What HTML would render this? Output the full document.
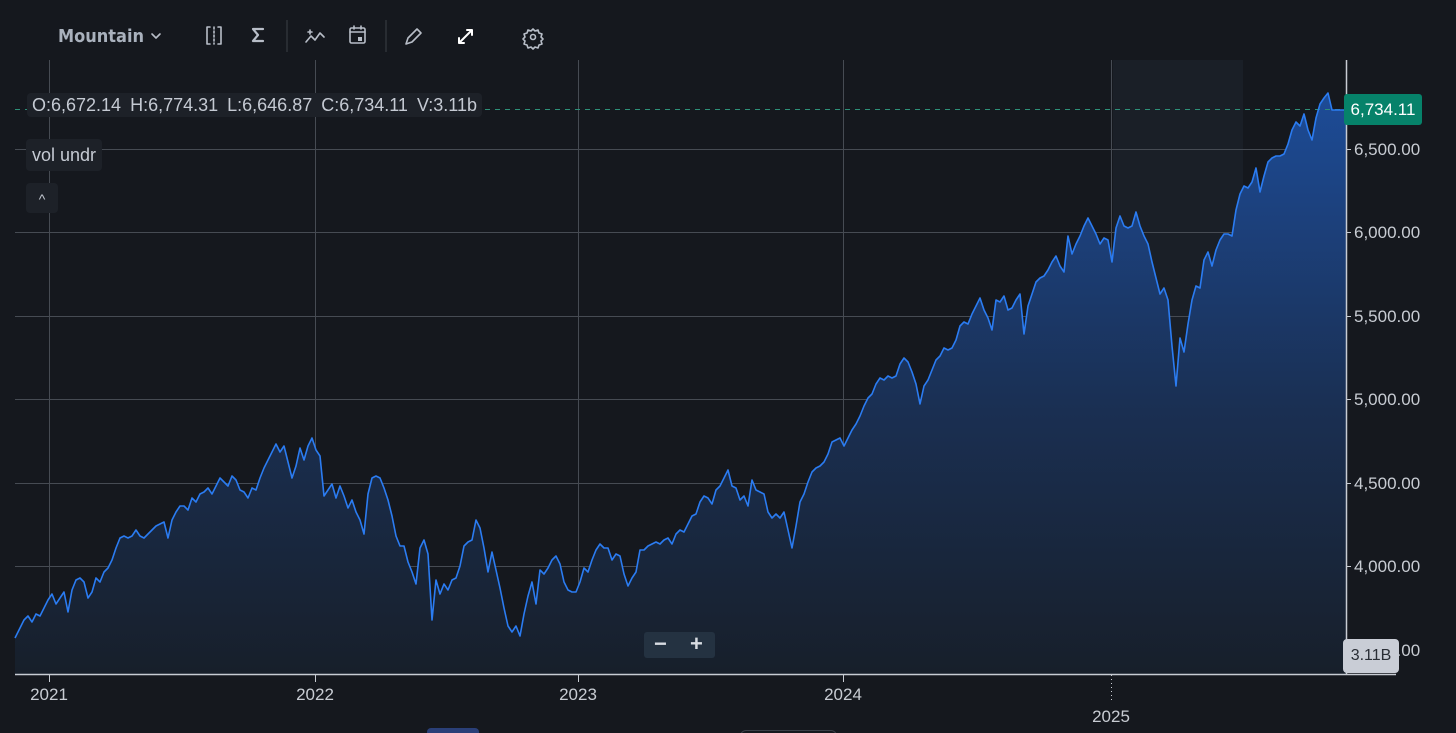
<!DOCTYPE html><html><head><style>
html,body{margin:0;width:1456px;height:733px;background:#15181e;overflow:hidden;font-family:"Liberation Sans",sans-serif;position:relative}
.t{position:absolute;color:#c5cad3}
.ax{position:absolute;left:1354px;font-size:17px;color:#c8ccd3}
.yr{position:absolute;font-size:17px;color:#c8ccd3;transform:translateX(-50%)}
</style></head><body>
<svg width="1456" height="733" style="position:absolute;left:0;top:0">
<defs><linearGradient id="g" gradientUnits="userSpaceOnUse" x1="0" y1="90" x2="0" y2="674"><stop offset="0" stop-color="#1d4c98"/><stop offset="0.55" stop-color="#1a2f52"/><stop offset="1" stop-color="#171f2a"/></linearGradient></defs>
<rect x="1113" y="60" width="130" height="614" fill="#1a1f27"/>
<g stroke="#464b53" stroke-width="1">
<line x1="15" y1="149.5" x2="1346" y2="149.5"/><line x1="15" y1="232.5" x2="1346" y2="232.5"/><line x1="15" y1="316.5" x2="1346" y2="316.5"/><line x1="15" y1="399.5" x2="1346" y2="399.5"/><line x1="15" y1="483.5" x2="1346" y2="483.5"/><line x1="15" y1="566.5" x2="1346" y2="566.5"/><line x1="15" y1="650.5" x2="1346" y2="650.5"/>
<line x1="49.5" y1="60" x2="49.5" y2="674"/><line x1="315.5" y1="60" x2="315.5" y2="674"/><line x1="578.5" y1="60" x2="578.5" y2="674"/><line x1="843.5" y1="60" x2="843.5" y2="674"/><line x1="1111.5" y1="60" x2="1111.5" y2="674"/>
</g>
<polygon id="p" fill="url(#g)" points="15,674 15,638 18,632 24,620 28,616 32,622 36,614 40,616 44,608 48,600 52,594 56,604 60,598 64,592 68,612 72,590 76,580 80,578 84,582 88,598 92,592 96,578 100,582 104,572 108,568 112,560 116,548 120,538 124,536 128,538 132,536 136,530 140,536 144,538 148,534 152,530 156,526 160,524 164,522 168,538 172,520 176,512 180,506 184,506 188,510 192,498 196,502 200,494 204,492 208,488 212,494 216,486 220,478 224,482 228,486 232,476 236,480 240,490 244,492 248,498 252,488 256,490 260,478 264,468 268,460 272,452 276,444 280,452 284,446 288,462 292,478 296,466 300,448 304,460 308,446 312,438 316,450 320,456 324,496 328,490 332,484 336,498 340,486 344,496 348,508 352,500 356,512 360,520 364,534 368,494 372,478 376,476 380,478 384,488 388,500 392,516 396,536 400,546 404,546 408,562 412,572 416,584 420,548 424,540 428,554 432,620 436,580 440,594 444,584 448,590 452,580 456,578 460,566 464,546 468,542 472,540 476,520 480,528 484,548 488,572 492,552 496,570 500,588 504,608 508,626 512,632 516,626 520,636 524,614 528,596 532,582 536,604 540,570 544,574 548,568 552,560 556,556 560,564 564,582 568,590 572,592 576,592 580,582 584,568 588,572 592,560 596,550 600,544 604,548 608,548 612,560 616,554 620,556 624,574 628,586 632,578 636,572 640,550 644,550 648,546 652,544 656,542 660,544 664,540 668,538 672,544 676,534 680,530 684,532 688,524 692,516 696,514 700,502 704,496 708,498 712,504 716,490 720,486 724,478 728,470 732,486 736,488 740,500 744,496 748,506 752,480 756,490 760,492 764,494 768,512 772,518 776,514 780,518 784,512 788,530 792,548 796,526 800,502 804,494 808,482 812,472 816,468 820,466 824,462 828,454 832,442 836,440 840,438 844,446 848,438 852,430 856,424 860,416 864,406 868,398 872,394 876,384 880,378 884,380 888,376 892,378 896,376 900,364 904,358 908,362 912,372 916,384 920,404 924,386 928,380 932,370 936,360 940,356 944,348 948,350 952,348 956,340 960,326 964,322 968,324 972,314 976,306 980,298 984,310 988,318 992,330 996,300 1000,302 1004,296 1008,310 1012,308 1016,300 1020,294 1024,334 1028,306 1032,294 1036,282 1040,278 1044,276 1048,270 1052,262 1056,256 1060,266 1064,272 1068,236 1072,254 1076,244 1080,236 1084,226 1088,218 1092,226 1096,234 1100,244 1104,238 1108,240 1112,262 1116,228 1120,216 1124,226 1128,228 1132,226 1136,212 1140,226 1144,236 1148,244 1152,262 1156,278 1160,294 1164,288 1168,300 1172,346 1176,386 1180,338 1184,352 1188,324 1192,300 1196,286 1200,288 1204,260 1208,252 1212,266 1216,250 1220,240 1224,234 1228,234 1232,236 1236,210 1240,194 1244,186 1248,188 1252,182 1256,168 1260,192 1264,176 1268,162 1272,158 1276,156 1280,156 1284,154 1288,144 1292,130 1296,122 1300,126 1304,114 1308,130 1312,140 1316,118 1320,104 1324,98 1328,93 1332,110 1336,110 1346,110 1346,674"/>
<line x1="15" y1="109.5" x2="1346" y2="109.5" stroke="#2d8f78" stroke-dasharray="5,5" stroke-width="1"/>
<polyline id="l" fill="none" stroke="#2b7cf2" stroke-width="1.6" stroke-linejoin="round" points=""/>
<line x1="1346.5" y1="60" x2="1346.5" y2="674" stroke="#c8ccd3" stroke-width="1.5"/>
<line x1="15" y1="674.5" x2="1396" y2="674.5" stroke="#c8ccd3" stroke-width="1.5"/>
<g stroke="#c8ccd3"><line x1="49.5" y1="675" x2="49.5" y2="682"/><line x1="315.5" y1="675" x2="315.5" y2="682"/><line x1="578.5" y1="675" x2="578.5" y2="682"/><line x1="843.5" y1="675" x2="843.5" y2="682"/><line x1="1111.5" y1="675" x2="1111.5" y2="700" stroke-dasharray="1,3"/></g>
<g stroke="#c8ccd3"><line x1="1346" y1="149.5" x2="1351" y2="149.5"/><line x1="1346" y1="232.5" x2="1351" y2="232.5"/><line x1="1346" y1="316.5" x2="1351" y2="316.5"/><line x1="1346" y1="399.5" x2="1351" y2="399.5"/><line x1="1346" y1="483.5" x2="1351" y2="483.5"/><line x1="1346" y1="566.5" x2="1351" y2="566.5"/></g>
<line x1="287" y1="20" x2="287" y2="52" stroke="#3a3f47"/><line x1="386" y1="20" x2="386" y2="52" stroke="#3a3f47"/>
<g fill="none" stroke="#b8bec8" stroke-width="1.6" stroke-linecap="round" stroke-linejoin="round">
<path d="M152,34 l4,4 4,-4"/>
<path d="M210,27 h-3 v17 h3 M218,27 h3 v17 h-3"/><path d="M214,27 v17" stroke-dasharray="2,2"/>
<path d="M263,29 h-10 l5,6 -5,6 h10" stroke-width="2.2"/>
<path d="M306,42 l5,-6 4,4 5,-7 4,4 M310,30 v4 M308,32 h4"/>
<rect x="350" y="28" width="15" height="15" rx="1.5"/><path d="M350,32 h15 M354,26 v3 M361,26 v3"/>
<path d="M406,44 l2,-6 9,-9 4,4 -9,9 z"/>
<path d="M459,43 l13,-13 M459,43 v-5 M459,43 h5 M472,30 v5 M472,30 h-5" stroke="#fff" stroke-width="2"/>
<circle cx="533" cy="37" r="2.5"/><path d="M533,29 l2,2 3,-1 1,3 3,1 -1,3 2,2 -2,2 1,3 -3,1 -1,3 -3,-1 -2,2 -2,-2 -3,1 -1,-3 -3,-1 1,-3 -2,-2 2,-2 -1,-3 3,-1 1,-3 3,1 z"/>
</g>
<rect x="358" y="37" width="4" height="4" fill="#b8bec8"/>
</svg>
<script>document.getElementById('l').setAttribute('points',document.getElementById('p').getAttribute('points').split(' ').slice(1,-1).join(' '));</script>
<div class="t" style="left:58px;top:26px;font-size:18px;color:#a9b1bd;font-weight:bold;font-family:'DejaVu Sans Condensed','Liberation Sans',sans-serif">Mountain</div>
<div class="t" style="left:27px;top:93px;height:24px;padding:0 5px;background:#1d2128;border-radius:4px;font-size:18px;line-height:24px;word-spacing:4px;white-space:nowrap">O:6,672.14 H:6,774.31 L:6,646.87 C:6,734.11 V:3.11b</div>
<div class="t" style="left:26px;top:139px;height:32px;padding:0 6px;background:#1d2128;border-radius:4px;font-size:18px;line-height:32px">vol undr</div>
<div class="t" style="left:26px;top:183px;width:32px;height:30px;background:#1d2128;border-radius:4px;font-size:14px;text-align:center;line-height:32px">^</div>
<div class="t" style="left:644px;top:632px;width:71px;height:26px;background:#243241;border-radius:3px;color:#d8dce2;font-size:22px;line-height:24px;font-weight:bold"><span style="position:absolute;left:10px">−</span><span style="position:absolute;left:46px">+</span></div>
<div class="t" style="left:1344px;top:94px;width:78px;height:31px;background:#06826a;border-radius:3px;color:#fff;font-size:17px;line-height:31px;text-align:center">6,734.11</div>
<div class="ax" style="top:140px">6,500.00</div><div class="ax" style="top:223px">6,000.00</div><div class="ax" style="top:307px">5,500.00</div><div class="ax" style="top:390px">5,000.00</div><div class="ax" style="top:474px">4,500.00</div><div class="ax" style="top:557px">4,000.00</div><div class="ax" style="top:641px">3,500.00</div>
<div class="t" style="left:1343px;top:639px;width:56px;height:34px;background:#c9cdd6;border-radius:4px;color:#2a2e36;font-size:16px;line-height:34px;text-align:center">3.11B</div>
<div class="yr" style="left:49px;top:685px">2021</div><div class="yr" style="left:315px;top:685px">2022</div><div class="yr" style="left:578px;top:685px">2023</div><div class="yr" style="left:843px;top:685px">2024</div><div class="yr" style="left:1111px;top:707px">2025</div>
<div style="position:absolute;left:427px;top:728px;width:52px;height:10px;background:#2a3f78;border-radius:4px"></div>
<div style="position:absolute;left:740px;top:730px;width:95px;height:10px;border:1px solid #3a3f47;border-radius:6px"></div>
</body></html>
